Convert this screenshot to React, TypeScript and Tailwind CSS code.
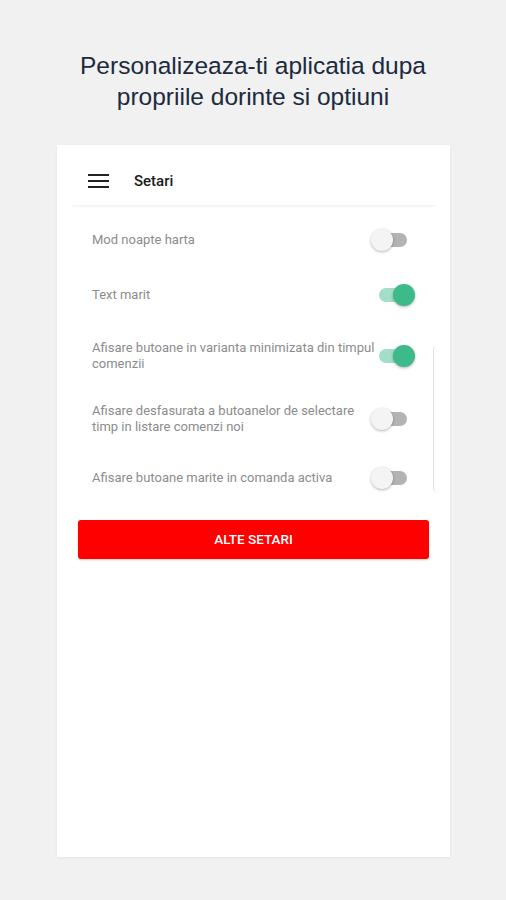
import { useState } from 'react'

const rows = [
  { label: 'Mod noapte harta', on: false, h: 44 },
  { label: 'Text marit', on: true, h: 66 },
  { label: 'Afisare butoane in varianta minimizata din timpul comenzii', on: true, h: 56 },
  { label: 'Afisare desfasurata a butoanelor de selectare timp in listare comenzi noi', on: false, h: 70 },
  { label: 'Afisare butoane marite in comanda activa', on: false, h: 48 },
]

function Toggle({ on }: { on: boolean }) {
  return (
    <div className="relative -ml-[10px] h-[22px] w-[44px] shrink-0">
      <div
        className={
          on
            ? 'absolute left-[8px] top-[4px] h-[14px] w-[28px] rounded-full bg-[#a3dec8]'
            : 'absolute left-[8px] top-[4px] h-[14px] w-[28px] rounded-full bg-[#b3b3b3]'
        }
      />
      <div
        className={
          on
            ? 'absolute left-[22px] top-0 h-[22px] w-[22px] rounded-full bg-[#3dba8a] shadow-[0_1px_3px_rgba(0,0,0,0.3)]'
            : 'absolute left-0 top-0 h-[22px] w-[22px] rounded-full bg-[#f4f4f4] shadow-[0_1px_3px_rgba(0,0,0,0.3)]'
        }
      />
    </div>
  )
}

export default function App() {
  const [items] = useState(rows)

  return (
    <div className="min-h-[900px] bg-[#f1f1f1] pt-[50px] font-['Liberation_Sans',sans-serif]">
      <h1 className="text-center text-[24.5px] leading-[31px] text-[#1c2a3d]">
        Personalizeaza-ti aplicatia dupa
        <br />
        propriile dorinte si optiuni
      </h1>

      <div className="mx-[57px] mt-[33px] h-[712px] w-[393px] bg-white shadow-[0_1px_3px_rgba(0,0,0,0.06)] font-['Roboto',sans-serif]">
        <div className="mx-[13px] flex h-[60px] items-center px-[18px] pt-[12px] shadow-[0_3px_3px_-2px_rgba(0,0,0,0.08)]">
          <div className="flex w-[21px] flex-col gap-[4px]">
            <span className="h-[2px] w-full bg-[#222]" />
            <span className="h-[2px] w-full bg-[#222]" />
            <span className="h-[2px] w-full bg-[#222]" />
          </div>
          <span className="ml-[25px] text-[15px] font-medium text-[#1a1a1a]">Setari</span>
        </div>

        <div className="relative px-[35px] pt-[13px]">
          <div className="absolute right-[13px] top-[141px] h-[146px] w-[4px] rounded-l-[4px] border-l border-[#e2e2e2]" />
          {items.map((row) => (
            <div
              key={row.label}
              style={{ height: row.h }}
              className="flex items-center justify-between"
            >
              <span className="max-w-[289px] text-[13px] leading-[16px] text-[#8c8c8c]">{row.label}</span>
              <Toggle on={row.on} />
            </div>
          ))}
        </div>

        <div className="px-[21px] pt-[18px]">
          <button className="flex h-[39px] w-full items-center justify-center rounded-[3px] bg-[#ff0000] text-[13.5px] font-medium text-white shadow-[0_1px_2px_rgba(0,0,0,0.2)]">
            ALTE SETARI
          </button>
        </div>
      </div>
    </div>
  )
}
